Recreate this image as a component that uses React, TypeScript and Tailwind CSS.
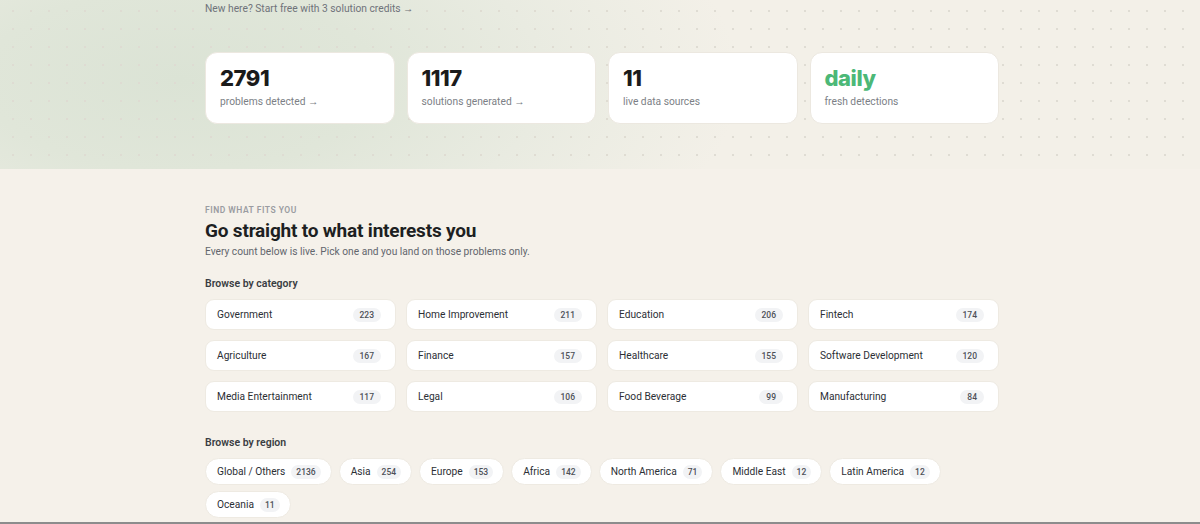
import React from 'react';

const stats = [
  { value: '2791', label: 'problems detected →', accent: false },
  { value: '1117', label: 'solutions generated →', accent: false },
  { value: '11', label: 'live data sources', accent: false },
  { value: 'daily', label: 'fresh detections', accent: true },
];

const categories: [string, number][] = [
  ['Government', 223],
  ['Home Improvement', 211],
  ['Education', 206],
  ['Fintech', 174],
  ['Agriculture', 167],
  ['Finance', 157],
  ['Healthcare', 155],
  ['Software Development', 120],
  ['Media Entertainment', 117],
  ['Legal', 106],
  ['Food Beverage', 99],
  ['Manufacturing', 84],
];

const regions: [string, number][] = [
  ['Global / Others', 2136],
  ['Asia', 254],
  ['Europe', 153],
  ['Africa', 142],
  ['North America', 71],
  ['Middle East', 12],
  ['Latin America', 12],
  ['Oceania', 11],
];

function StatCard({ value, label, accent }: { value: string; label: string; accent: boolean }) {
  return (
    <div className="h-[72px] rounded-xl bg-white border border-[#ece8e0] px-[14px] pt-[11px]">
      <div
        className={`text-[22px] leading-[28px] font-extrabold tracking-[-0.02em] font-['Inter',sans-serif] ${
          accent ? 'text-[#4cb877]' : 'text-[#1b1b1b]'
        }`}
      >
        {value}
      </div>
      <div className="mt-[3px] text-[10.25px] leading-[14px] text-[#7c7f86]">{label}</div>
    </div>
  );
}

export default function App() {
  return (
    <div className="w-[1200px] h-[524px] overflow-hidden bg-[#f5f1ea] font-['Roboto',sans-serif] text-[#2a2d33] relative">
      {/* hero tail: green wash + dot grid */}
      <div className="h-[169px] bg-[#f3f0e8] bg-[radial-gradient(ellipse_560px_260px_at_180px_80px,#dbe3d5_0%,#e0e6d9_35%,#e9ebe1_65%,transparent_100%)]">
        <div className="h-full bg-[radial-gradient(circle,#dedbd2_0.7px,transparent_1.1px)] bg-[size:18px_18px] bg-[position:4px_2px]">
          <div className="ml-[205px] w-[794px] pt-[2px]">
            <p className="text-[10.25px] leading-[14px] text-[#6f737a]">
              New here? Start free with 3 solution credits →
            </p>
            <div className="mt-[36px] grid grid-cols-4 gap-[12px]">
              {stats.map((s) => (
                <StatCard key={s.value} {...s} />
              ))}
            </div>
          </div>
        </div>
      </div>

      <div className="ml-[205px] w-[794px] pt-[35px]">
        <div className="text-[8.5px] leading-[12px] font-semibold tracking-[0.06em] text-[#9a9ca1] uppercase">
          Find what fits you
        </div>
        <h2 className="mt-[2px] text-[19px] leading-[26px] font-bold tracking-[-0.01em] text-[#1d1f22]">
          Go straight to what interests you
        </h2>
        <p className="mt-[1px] text-[10.2px] leading-[14px] text-[#62666d]">
          Every count below is live. Pick one and you land on those problems only.
        </p>

        <h3 className="mt-[18px] text-[10.5px] leading-[14px] font-semibold text-[#3a3d42]">Browse by category</h3>
        <div className="mt-[8px] grid grid-cols-4 gap-x-[10px] gap-y-[10px]">
          {categories.map(([name, count]) => (
            <div
              key={name}
              className="h-[31px] rounded-[9px] bg-white border border-[#eeeae2] flex items-center justify-between pl-[11px] pr-[14px]"
            >
              <span className="text-[10.2px] text-[#2c2f35]">{name}</span>
              <span className="rounded-full bg-[#f2f3f5] px-[7px] text-[8.5px] leading-[14px] font-medium text-[#4d5057]">
                {count}
              </span>
            </div>
          ))}
        </div>

        <h3 className="mt-[24px] text-[10.5px] leading-[14px] font-semibold text-[#3a3d42]">Browse by region</h3>
        <div className="mt-[8px] flex flex-wrap gap-x-[7px] gap-y-[6px]">
          {regions.map(([name, count]) => (
            <div
              key={name}
              className="h-[27px] rounded-full bg-white border border-[#eeeae2] flex items-center gap-[6px] pl-[11px] pr-[10px]"
            >
              <span className="text-[10.2px] text-[#2c2f35]">{name}</span>
              <span className="rounded-full bg-[#f2f3f5] px-[5px] text-[8.5px] leading-[14px] font-medium text-[#4d5057]">
                {count}
              </span>
            </div>
          ))}
        </div>
      </div>

      <div className="absolute left-0 right-0 bottom-0 h-[2px] bg-[#8c8c8c]" />
    </div>
  );
}
